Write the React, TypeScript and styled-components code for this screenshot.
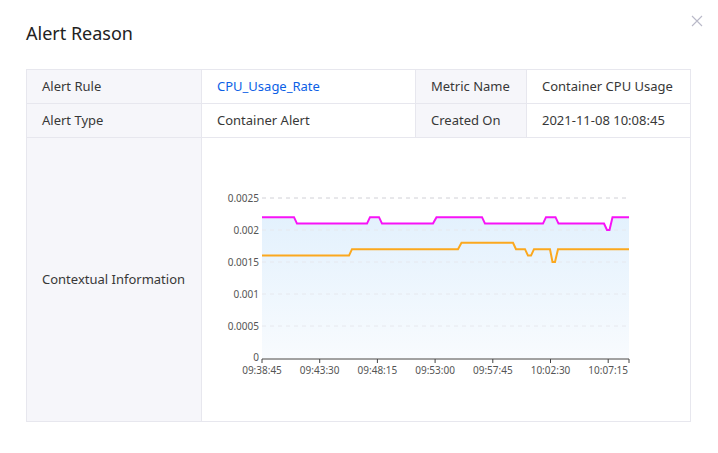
import { createGlobalStyle, styled } from "styled-components"

const GlobalStyle = createGlobalStyle`
    html, body {
        margin: 0;
        padding: 0;
        background: #fff;
    }
    body {
        font-family: "Noto Sans", "Open Sans", sans-serif;
        color: #333;
    }
`

const Dialog = styled.div`
    position: relative;
    width: 718px;
    height: 453px;
    padding: 20px 26px 0;
    box-sizing: border-box;
    background: #fff;
`

const Title = styled.h2`
    margin: 0;
    height: 28px;
    font-size: 18px;
    font-weight: 400;
    line-height: 27px;
    color: #222;
`

const Close = styled.button`
    position: absolute;
    top: 14px;
    right: 14px;
    width: 14px;
    height: 14px;
    padding: 0;
    border: none;
    background: none;
    cursor: pointer;
`

const Table = styled.div`
    display: grid;
    grid-template-columns: 174px 213px 110px 163px;
    grid-template-rows: 33px 33px 283px;
    gap: 1px;
    margin-top: 21px;
    padding: 1px;
    width: fit-content;
    background: #e7e7ee;
    font-size: 13px;
`

const Cell = styled.div<{ $label?: boolean }>`
    display: flex;
    align-items: center;
    padding: 0 15px 1px;
    background: ${(p) => (p.$label ? "#f6f6fa" : "#fff")};
    color: #383838;
    white-space: nowrap;
`

const ChartCell = styled.div`
    grid-column: span 3;
    background: #fff;

    svg {
        display: block;
    }
`

const Link = styled.a`
    color: #0c5fe6;
    text-decoration: none;
`

// 页面坐标 -> 图表坐标
const OX = 202
const OY = 138
const y = (v: number) => 358 - v * 64000 - OY
const x = (px: number) => px - OX

const magenta: [number, number][] = [
    [262, 0.0022], [294, 0.0022], [297, 0.0021], [367, 0.0021], [370, 0.0022],
    [379, 0.0022], [382, 0.0021], [433, 0.0021], [436.5, 0.0022], [482, 0.0022],
    [485, 0.0021], [543, 0.0021], [546, 0.0022], [555.5, 0.0022], [558.5, 0.0021],
    [604, 0.0021], [607, 0.002], [609.5, 0.002], [612.5, 0.0022], [629, 0.0022],
]

const orange: [number, number][] = [
    [262, 0.0016], [349, 0.0016], [352, 0.0017], [458, 0.0017], [461.5, 0.0018],
    [513, 0.0018], [516, 0.0017], [525, 0.0017], [528, 0.0016], [531, 0.0016],
    [534, 0.0017], [550, 0.0017], [552.5, 0.0015], [555, 0.0015], [558, 0.0017],
    [629, 0.0017],
]

const toPoints = (d: [number, number][]) => d.map(([px, v]) => `${x(px)},${y(v)}`).join(" ")

const yTicks = [
    { v: 0.0025, label: "0.0025" },
    { v: 0.002, label: "0.002" },
    { v: 0.0015, label: "0.0015" },
    { v: 0.001, label: "0.001" },
    { v: 0.0005, label: "0.0005" },
    { v: 0, label: "0" },
]

const xTicks = ["09:38:45", "09:43:30", "09:48:15", "09:53:00", "09:57:45", "10:02:30", "10:07:15"]

const Chart = () => {
    const left = x(262)
    const right = x(629)
    const base = y(0)
    const area = `${left},${base} ${toPoints(magenta)} ${right},${base}`
    return (
        <svg width="488" height="283" fontFamily='"Noto Sans", sans-serif' fontSize="10">
            <defs>
                <linearGradient id="fill" x1="0" y1="0" x2="0" y2="1">
                    <stop offset="0" stopColor="#e3f1fd" />
                    <stop offset="1" stopColor="#f8fbfe" />
                </linearGradient>
            </defs>
            <polygon points={area} fill="url(#fill)" />
            {yTicks.map((t, i) =>
                t.v > 0 ? (
                    <line
                        key={t.label}
                        x1={left}
                        x2={right}
                        y1={y(t.v)}
                        y2={y(t.v)}
                        stroke={i === 0 ? "#d0d0d6" : "#e6e8ee"}
                        strokeDasharray="4 4"
                    />
                ) : null
            )}
            {yTicks.map((t) => (
                <text key={t.label} x={left - 3} y={y(t.v) + (t.v > 0 ? 3.5 : 2.5)} textAnchor="end" fill="#555">
                    {t.label}
                </text>
            ))}
            <polyline points={toPoints(orange)} fill="none" stroke="#fba81e" strokeWidth="2" />
            <polyline points={toPoints(magenta)} fill="none" stroke="#f713f7" strokeWidth="2" />
            <line x1={left} x2={right} y1={base + 1} y2={base + 1} stroke="#444" />
            {xTicks.map((t, i) => {
                const tx = left + i * 57.7
                return (
                    <g key={t}>
                        <line x1={tx} x2={tx} y1={base + 1} y2={base + 5} stroke="#444" />
                        <text x={tx} y={base + 15.5} textAnchor="middle" fill="#555">
                            {t}
                        </text>
                    </g>
                )
            })}
            <line x1={right} x2={right} y1={base + 1} y2={base + 5} stroke="#444" />
        </svg>
    )
}

export default () => {
    return (
        <Dialog>
            <GlobalStyle />
            <Title>Alert Reason</Title>
            <Close aria-label="close">
                <svg width="14" height="14" viewBox="0 0 14 14">
                    <path d="M2 2 L12 12 M12 2 L2 12" stroke="#b9b9c8" strokeWidth="1.1" />
                </svg>
            </Close>
            <Table>
                <Cell $label>Alert Rule</Cell>
                <Cell>
                    <Link href="#">CPU_Usage_Rate</Link>
                </Cell>
                <Cell $label>Metric Name</Cell>
                <Cell>Container CPU Usage</Cell>
                <Cell $label>Alert Type</Cell>
                <Cell>Container Alert</Cell>
                <Cell $label>Created On</Cell>
                <Cell>2021-11-08 10:08:45</Cell>
                <Cell $label>Contextual Information</Cell>
                <ChartCell>
                    <Chart />
                </ChartCell>
            </Table>
        </Dialog>
    )
}
